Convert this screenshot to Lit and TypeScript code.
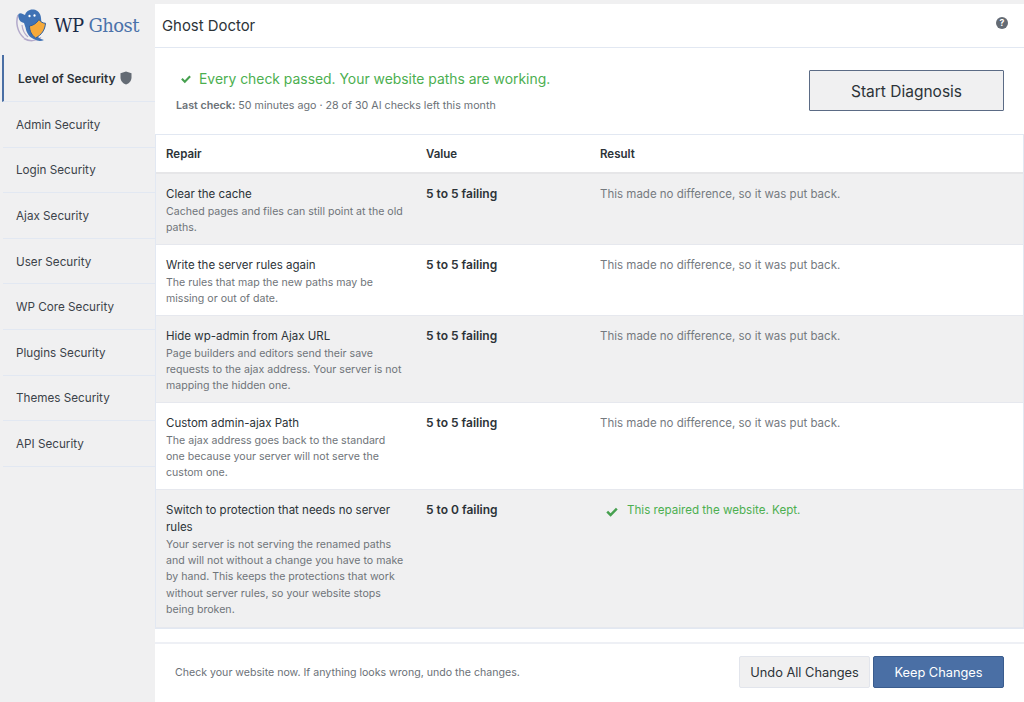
import { LitElement, html, css } from "lit";
import { customElement } from "lit/decorators.js";

const check = (size: number) => html`<svg class="chk" width=${size} height=${size} viewBox="0 0 16 16"><path d="M1.500 8.600l2-2 2.900 2.900 6.100-6.300 2 2-8.100 8.300z" fill="#46a04f"/></svg>`;

const rows = [
  { t: "Clear the cache", d: "Cached pages and files can still point at the old paths.", v: "5 to 5 failing", r: "This made no difference, so it was put back.", h: 71 },
  { t: "Write the server rules again", d: "The rules that map the new paths may be missing or out of date.", v: "5 to 5 failing", r: "This made no difference, so it was put back.", h: 71 },
  { t: "Hide wp-admin from Ajax URL", d: "Page builders and editors send their save requests to the ajax address. Your server is not mapping the hidden one.", v: "5 to 5 failing", r: "This made no difference, so it was put back.", h: 87 },
  { t: "Custom admin-ajax Path", d: "The ajax address goes back to the standard one because your server will not serve the custom one.", v: "5 to 5 failing", r: "This made no difference, so it was put back.", h: 87 },
  { t: "Switch to protection that needs no server rules", d: "Your server is not serving the renamed paths and will not without a change you have to make by hand. This keeps the protections that work without server rules, so your website stops being broken.", v: "5 to 0 failing", r: "This repaired the website. Kept.", ok: true, h: 138 },
];
const nav = ["Admin Security", "Login Security", "Ajax Security", "User Security", "WP Core Security", "Plugins Security", "Themes Security", "API Security"];

@customElement("app-root")
export class AppRoot extends LitElement {
  static styles = css`
    :host { display: flex; width: 1024px; height: 702px; overflow: hidden; background: #f0f0f1; font-family: Inter, "Noto Sans", sans-serif; color: #2c3338; }
    * { box-sizing: border-box; }
    .side { width: 155px; flex: none; padding-left: 2px; }
    .logo { height: 55px; display: flex; align-items: flex-start; padding: 9px 0 0 14px; gap: 8px; }
    .logo .name { font-family: "DejaVu Serif", "Liberation Serif", serif; font-size: 18px; line-height: 34px; letter-spacing: -0.6px; white-space: nowrap; color: #1a2a48; }
    .logo .name b { font-weight: 400; color: #4a72aa; }
    .item { height: 45.6px; display: flex; align-items: center; padding: 1px 0 0 13px; font-size: 11.7px; color: #3c434a; border-bottom: 1px solid #e2e8f2; margin-left: 1px; }
    .item.on { height: 47px; margin-left: 0; border-left: 2px solid #4a6fa5; padding: 0 0 0 14px; font-size: 12px; font-weight: 600; color: #2c3338; gap: 4px; }
    .main { flex: 1; min-width: 0; display: flex; flex-direction: column; padding-top: 4px; }
    .head { height: 44px; background: #fff; border-bottom: 1px solid #e2e8f2; display: flex; align-items: center; justify-content: space-between; padding: 0 16px 0 7px; font-size: 14.900px; color: #2c3338; }
    .head svg { margin-bottom: 5px; }
    .body { flex: 1; background: #fff; display: flex; flex-direction: column; }
    .status { height: 86px; display: flex; justify-content: space-between; padding: 21px 20px 0 21px; }
    .ok { display: flex; align-items: center; gap: 7px; font-size: 13.9px; color: #4caf50; line-height: 20px; padding-left: 4px; }
    .last { font-size: 10.7px; color: #6b7177; margin-top: 10px; line-height: 14px; }
    .last b { font-weight: 600; }
    .start { width: 195px; height: 41px; margin-top: 1px; padding-top: 2px; background: #f0f0f1; border: 1.5px solid #5b6b85; font: inherit; font-size: 15.5px; color: #2c3338; border-radius: 1px; }
    .table { border: 1px solid #e2e8f2; }
    .tr { display: grid; grid-template-columns: 260px 174px 1fr; border-bottom: 1px solid #e6e8ee; padding-left: 10px; }
    .tr > div { padding-top: 12px; }
    .tr.th { height: 39px; font-size: 11.5px; font-weight: 600; background: #fff; color: #2c3338; border-bottom: 2px solid #e6e6e8; }
    .tr.odd { background: #f0f0f1; }
    .tr.even { background: #fff; }
    .rep { padding-right: 21px; }
    .t { font-size: 11.5px; line-height: 17px; color: #2c3338; }
    .d { font-size: 10.6px; line-height: 16.2px; color: #6f7479; margin-top: 1px; }
    .tr > .v { font-size: 12px; font-weight: 600; line-height: 17px; padding-top: 11px; }
    .r { font-size: 11.5px; line-height: 17px; color: #757a7f; }
    .r.good { color: #4caf50; font-size: 11.6px; display: flex; align-items: flex-start; gap: 8px; padding-left: 5px; }
    .r.good svg { margin-top: 3px; }
    .foot { margin-top: 13px; border-top: 2px solid #eef0f5; flex: 1; display: flex; justify-content: space-between; align-items: flex-start; padding: 12px 20px 0 20px; }
    .foot p { margin: 1px 0 0; font-size: 10.6px; color: #6b7177; line-height: 32px; }
    .btns { display: flex; gap: 3px; }
    button { font-family: inherit; }
    .undo, .keep { height: 32px; width: 131px; font-size: 12.8px; border-radius: 2px; }
    .undo { background: #f0f0f1; border: 1px solid #e2e5ec; color: #2c3338; }
    .keep { background: #4a6fa5; border: 1px solid #3a5c8e; color: #fff; }
  `;

  render() {
    return html`
      <aside class="side">
        <div class="logo">
          <svg width="30" height="33" viewBox="16 9 30 33">
            <path d="M18 15C15.500 22 17 32 24 38" fill="none" stroke="#b3aacb" stroke-width="1.500"/>
            <path d="M22 25c.5 5 2.500 9 6 12" fill="none" stroke="#b3aacb" stroke-width="1.200"/>
            <path d="M24 38.500c5 3 12 3 17-1" fill="none" stroke="#b3aacb" stroke-width="1.500"/>
            <path d="M18.500 14c2.500-2 4.500.5 6.500 1 .8-3.500 4.500-6 8.500-5.500 4.500.5 7 4 7.500 8.500l.5 6-3.500 13c2 2 4 2.500 6 3-3 1.500-7 1-9-.5-5-1.500-8.500-6-9.500-12l-1.500-4.500c-3-.5-5-2.500-5.500-5.500-.3-1.500-.3-2.800 0-3.500z" fill="#3f72b5"/>
            <ellipse cx="29.500" cy="16" rx="1.100" ry="1.300" fill="#fff"/><ellipse cx="34.500" cy="15.500" rx="1.100" ry="1.300" fill="#fff"/>
            <path d="M29.500 26c3.500-.5 7-2.500 9.500-6.500 1.500 2.300 4 3.800 6.500 3.800-.5 6.700-4 11.700-10 14.700-3.800-3-6-7-6-12z" fill="#f5a93a" stroke="#2e5f9e" stroke-width="1"/>
          </svg>
          <div class="name">WP <b>Ghost</b></div>
        </div>
        <div class="item on">Level of Security
          <svg width="12" height="14" viewBox="0 0 12 14"><path d="M6 .5l5.500 1.800v4.200c0 3.400-2.300 5.900-5.500 7-3.200-1.100-5.500-3.600-5.500-7V2.300z" fill="#646b74"/></svg>
        </div>
        ${nav.map((n) => html`<div class="item">${n}</div>`)}
      </aside>
      <main class="main">
        <div class="head"><span>Ghost Doctor</span>
          <svg width="12" height="12" viewBox="0 0 13 13"><circle cx="6.500" cy="6.500" r="6.500" fill="#646b74"/><text x="6.500" y="10" text-anchor="middle" font-size="9.500" font-weight="700" font-family="Inter" fill="#fff">?</text></svg>
        </div>
        <div class="body">
          <div class="status">
            <div>
              <div class="ok">${check(12)}<span>Every check passed. Your website paths are working.</span></div>
              <div class="last"><b>Last check:</b> 50 minutes ago · 28 of 30 AI checks left this month</div>
            </div>
            <button class="start">Start Diagnosis</button>
          </div>
          <div class="table">
            <div class="tr th"><div>Repair</div><div>Value</div><div>Result</div></div>
            ${rows.map((r, i) => html`
              <div class="tr ${i % 2 ? "even" : "odd"}" style="height:${r.h}px">
                <div class="rep"><div class="t">${r.t}</div><div class="d">${r.d}</div></div>
                <div class="v">${r.v}</div>
                <div class="r ${r.ok ? "good" : ""}">${r.ok ? check(14) : ""}<span>${r.r}</span></div>
              </div>`)}
          </div>
          <div class="foot">
            <p>Check your website now. If anything looks wrong, undo the changes.</p>
            <div class="btns"><button class="undo">Undo All Changes</button><button class="keep">Keep Changes</button></div>
          </div>
        </div>
      </main>
    `;
  }
}
